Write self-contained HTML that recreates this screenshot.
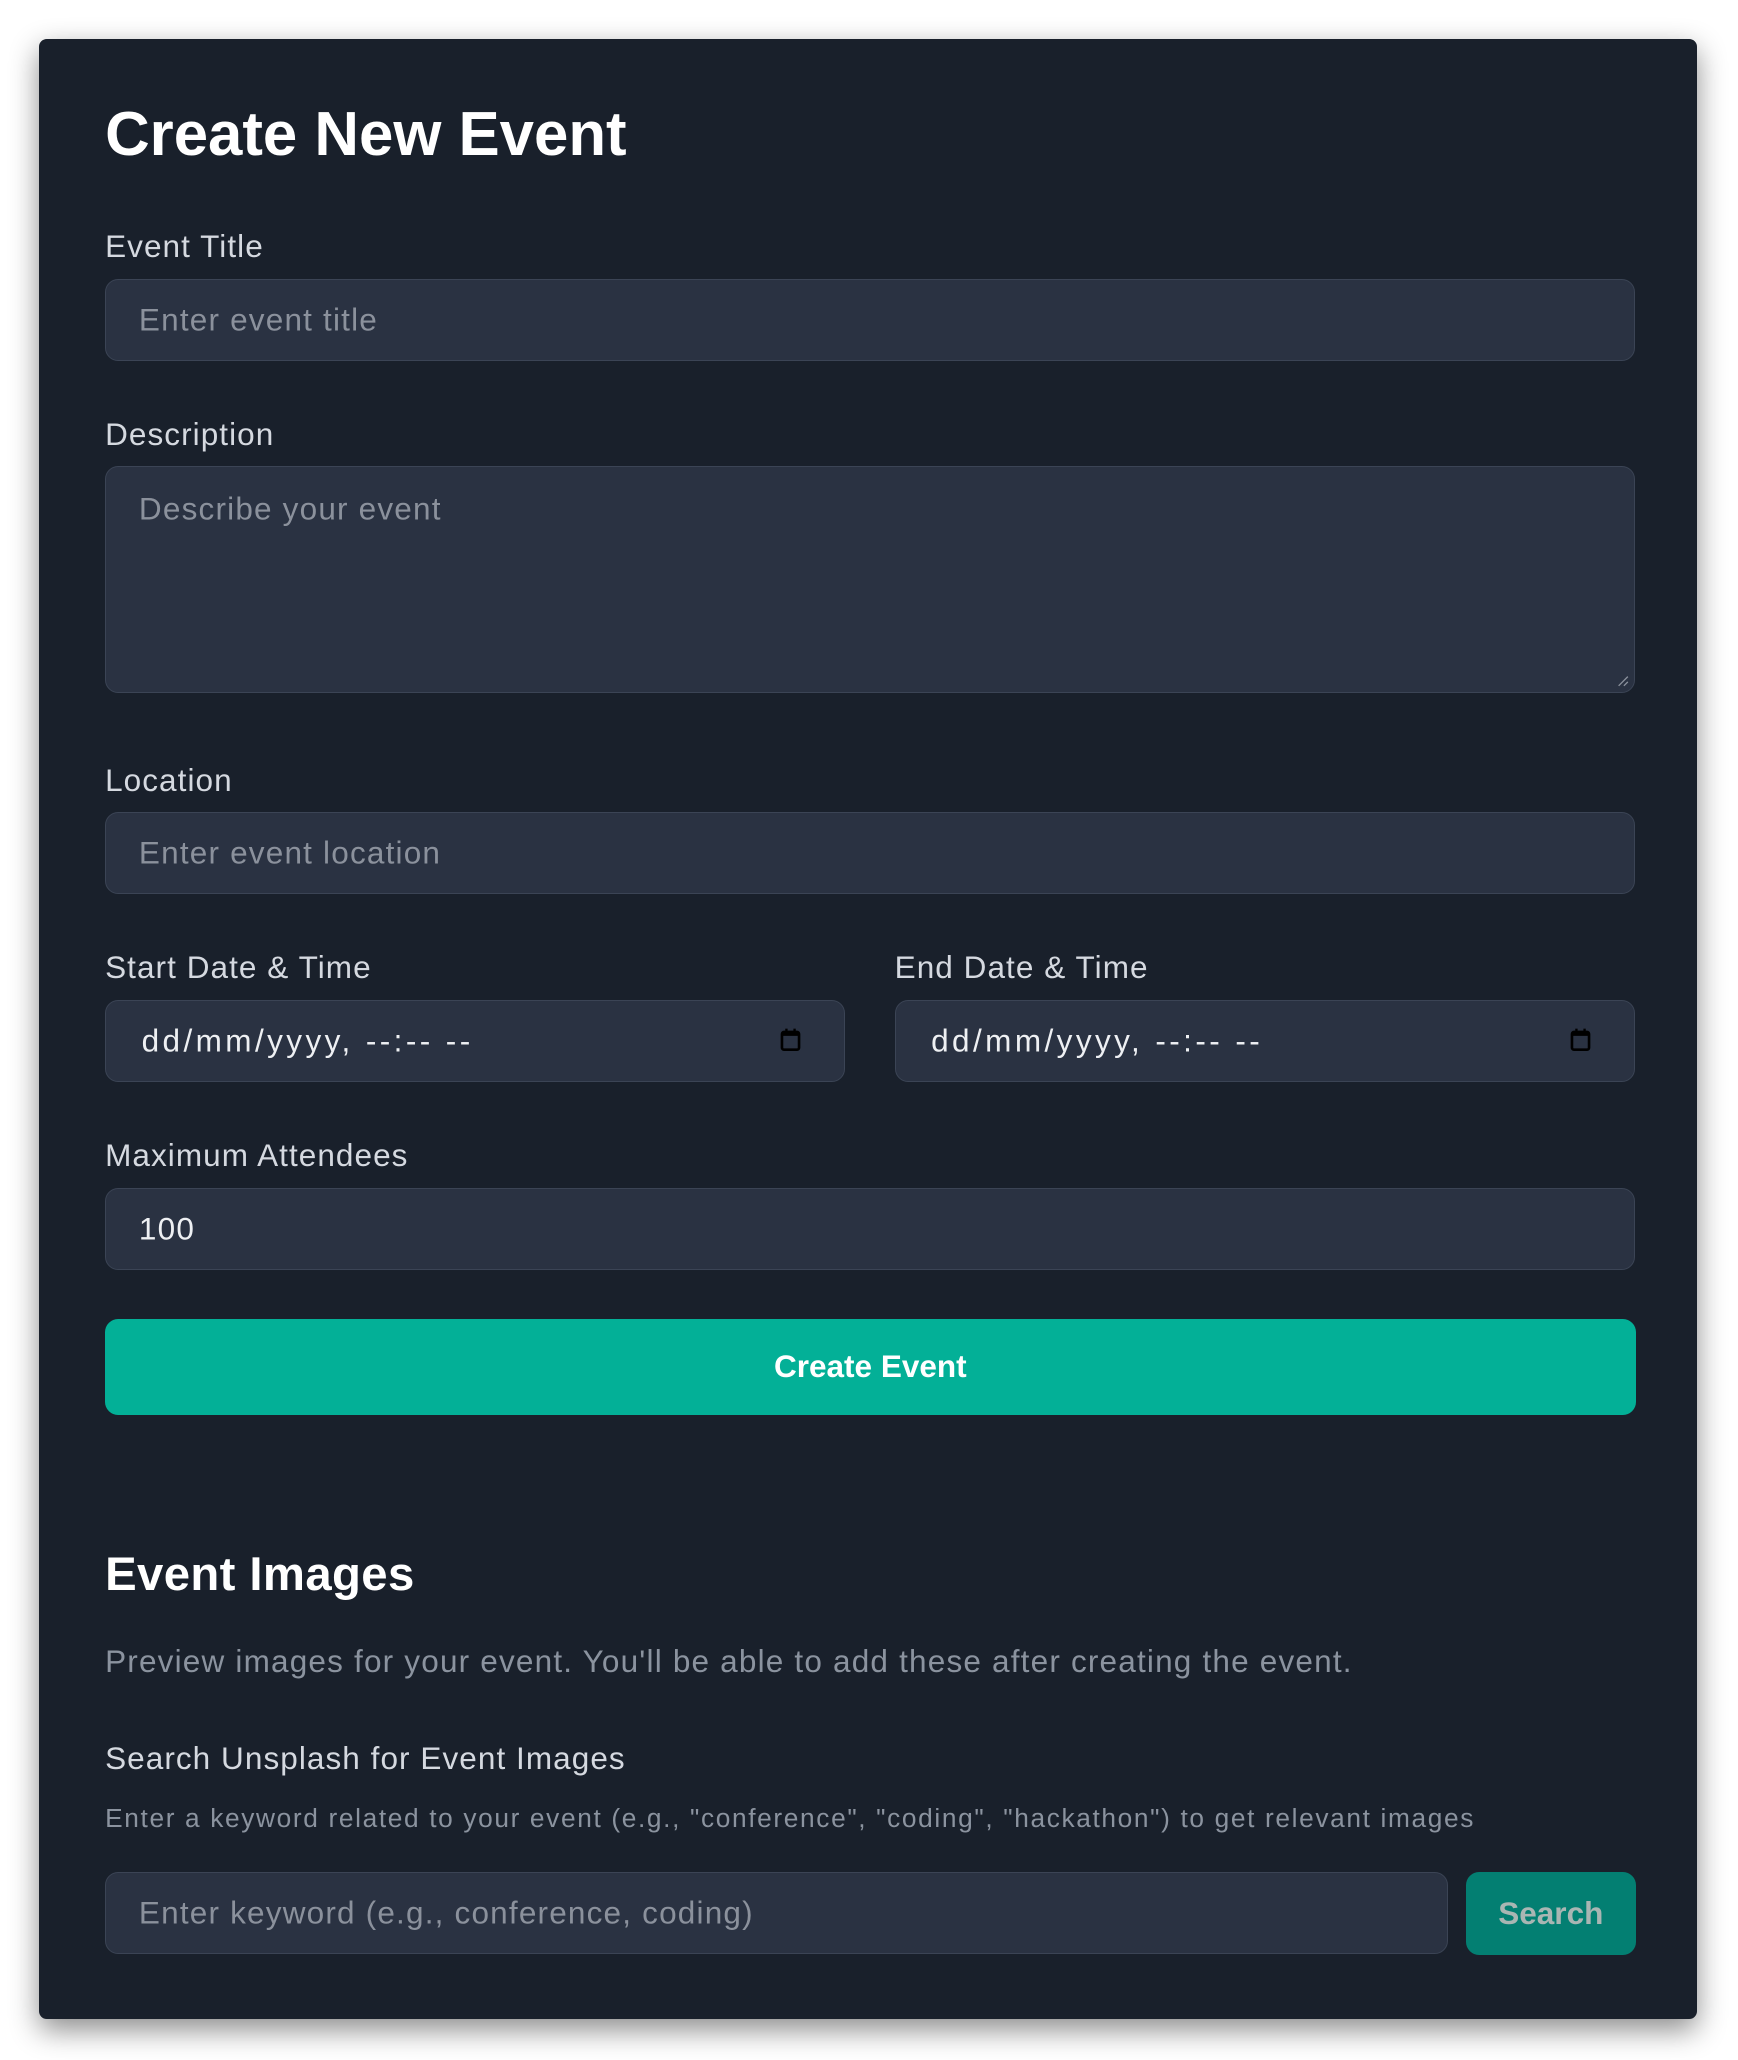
<!DOCTYPE html>
<html><head><meta charset="utf-8"><style>
html,body{margin:0;padding:0;background:#fff;}
body{width:1738px;height:2060px;overflow:hidden;}
#w{zoom:1.3137;width:1323px;height:1568px;position:relative;font-family:"Liberation Sans",sans-serif;}
.card{position:absolute;left:30px;top:30px;width:1262px;height:1507px;background:#19202b;border-radius:6px;box-shadow:0 8px 22px rgba(0,0,0,0.45);}
.a{position:absolute;white-space:nowrap;}
h1{position:absolute;left:80px;top:75px;margin:0;font-size:47px;font-weight:bold;color:#fff;letter-spacing:0px;}
.lbl{position:absolute;left:80px;font-size:24px;color:#d5d9e0;line-height:1;letter-spacing:0.8px;}
.in{position:absolute;left:80px;width:1163px;height:61px;background:#2a3242;border:1px solid #3b4455;border-radius:10px;box-sizing:content-box;}
.ph{position:absolute;left:25px;top:50%;transform:translateY(-50%);font-size:24px;color:#8b919c;white-space:nowrap;letter-spacing:0.9px;}
.val{color:#eef0f3;}
.dt{letter-spacing:2.6px;}
.cal{position:absolute;top:21px;width:16px;height:18px;}
</style></head><body><div id="w">
<div class="card"></div>
<h1>Create New Event</h1>
<div class="lbl" style="top:176px">Event Title</div>
<div class="in" style="top:212px"><span class="ph">Enter event title</span></div>
<div class="lbl" style="top:319px">Description</div>
<div class="in" style="top:355px;height:171px"><span class="ph" style="top:32px">Describe your event</span>
<svg style="position:absolute;right:4px;bottom:4px" width="10" height="10"><path d="M9 2L2 9M9 6L6 9" stroke="#8b919c" stroke-width="1"/></svg></div>
<div class="lbl" style="top:582px">Location</div>
<div class="in" style="top:618px"><span class="ph">Enter event location</span></div>
<div class="lbl" style="top:725px">Start Date &amp; Time</div>
<div class="lbl" style="top:725px;left:681px">End Date &amp; Time</div>
<div class="in" style="top:761px;width:562px"><span class="ph val dt" style="left:27px">dd/mm/yyyy, --:-- --</span>
<svg class="cal" style="left:513px" viewBox="0 0 16 18"><rect x="1.5" y="3" width="13" height="13.5" rx="1.5" fill="none" stroke="#000" stroke-width="2"/><rect x="1.5" y="3" width="13" height="3" fill="#000"/><rect x="4" y="0.5" width="1.8" height="3" fill="#000"/><rect x="10.2" y="0.5" width="1.8" height="3" fill="#000"/></svg></div>
<div class="in" style="top:761px;left:681px;width:562px"><span class="ph val dt" style="left:27px">dd/mm/yyyy, --:-- --</span>
<svg class="cal" style="left:513px" viewBox="0 0 16 18"><rect x="1.5" y="3" width="13" height="13.5" rx="1.5" fill="none" stroke="#000" stroke-width="2"/><rect x="1.5" y="3" width="13" height="3" fill="#000"/><rect x="4" y="0.5" width="1.8" height="3" fill="#000"/><rect x="10.2" y="0.5" width="1.8" height="3" fill="#000"/></svg></div>
<div class="lbl" style="top:868px">Maximum Attendees</div>
<div class="in" style="top:904px"><span class="ph val">100</span></div>
<div class="a" style="left:80px;top:1004px;width:1165px;height:73px;background:#03b097;border-radius:10px;color:#fff;font-size:24px;font-weight:bold;text-align:center;line-height:73px;">Create Event</div>
<div class="a" style="left:80px;top:1179px;font-size:36px;font-weight:bold;color:#fff;line-height:1.1;letter-spacing:0.3px;">Event Images</div>
<div class="a" style="left:80px;top:1253px;font-size:24px;color:#8b939f;line-height:1;letter-spacing:0.9px;">Preview images for your event. You'll be able to add these after creating the event.</div>
<div class="lbl" style="top:1327px">Search Unsplash for Event Images</div>
<div class="a" style="left:80px;top:1374px;font-size:20px;color:#8b939f;line-height:1;letter-spacing:1.25px;">Enter a keyword related to your event (e.g., "conference", "coding", "hackathon") to get relevant images</div>
<div class="in" style="top:1425px;width:1021px"><span class="ph">Enter keyword (e.g., conference, coding)</span></div>
<div class="a" style="left:1116px;top:1425px;width:129px;height:63px;background:#037f72;border-radius:10px;color:#a9b6b3;font-size:24px;font-weight:bold;text-align:center;line-height:63px;">Search</div>
</div></body></html>
